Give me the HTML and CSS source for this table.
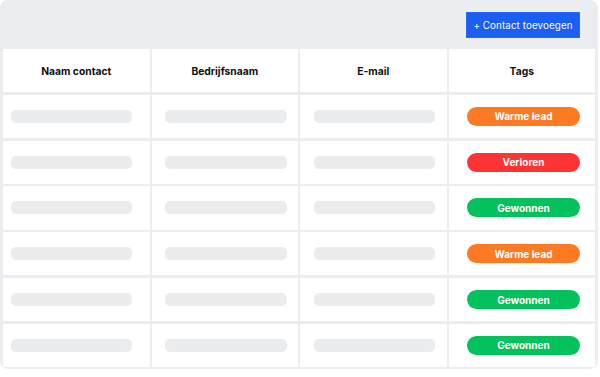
FILE: index.html
```html
<!DOCTYPE html>
<html lang="nl">
<head>
<meta charset="utf-8">
<title>Contacten</title>
<link rel="stylesheet" href="styles.css">
</head>
<body>
<div class="panel">
  <div class="toolbar">
    <button class="add-btn">+ Contact toevoegen</button>
  </div>
  <div class="table">
    <div class="cell head">Naam contact</div>
    <div class="cell head">Bedrijfsnaam</div>
    <div class="cell head">E-mail</div>
    <div class="cell head">Tags</div>

    <div class="cell c1"><span class="bar"></span></div>
    <div class="cell c2"><span class="bar"></span></div>
    <div class="cell c3"><span class="bar"></span></div>
    <div class="cell c4"><span class="tag orange">Warme lead</span></div>

    <div class="cell c1"><span class="bar"></span></div>
    <div class="cell c2"><span class="bar"></span></div>
    <div class="cell c3"><span class="bar"></span></div>
    <div class="cell c4"><span class="tag red">Verloren</span></div>

    <div class="cell c1"><span class="bar"></span></div>
    <div class="cell c2"><span class="bar"></span></div>
    <div class="cell c3"><span class="bar"></span></div>
    <div class="cell c4"><span class="tag green">Gewonnen</span></div>

    <div class="cell c1"><span class="bar"></span></div>
    <div class="cell c2"><span class="bar"></span></div>
    <div class="cell c3"><span class="bar"></span></div>
    <div class="cell c4"><span class="tag orange">Warme lead</span></div>

    <div class="cell c1"><span class="bar"></span></div>
    <div class="cell c2"><span class="bar"></span></div>
    <div class="cell c3"><span class="bar"></span></div>
    <div class="cell c4"><span class="tag green">Gewonnen</span></div>

    <div class="cell c1"><span class="bar"></span></div>
    <div class="cell c2"><span class="bar"></span></div>
    <div class="cell c3"><span class="bar"></span></div>
    <div class="cell c4"><span class="tag green">Gewonnen</span></div>
  </div>
</div>
</body>
</html>
```

FILE: styles.css
```css
* { box-sizing: border-box; }
html, body { margin: 0; padding: 0; background: #ffffff; }
body {
  font-family: Inter, "Noto Sans", sans-serif;
  width: 600px;
  height: 377px;
}
.panel {
  width: 598px;
  height: 369px;
  background: #ecedf0;
  border-radius: 8px;
  padding: 0 3px 2px 3px;
  display: flex;
  flex-direction: column;
}
.toolbar {
  height: 49px;
  flex: none;
  display: flex;
  justify-content: flex-end;
  align-items: flex-start;
  padding: 12px 15px 0 0;
}
.add-btn {
  width: 114px;
  height: 26px;
  background: #1b5ef4;
  color: #ffffff;
  border: 1px solid #2a6af8;
  font-family: Inter, "Noto Sans", sans-serif;
  font-size: 9.8px;
  font-weight: 400;
  padding: 0;
  letter-spacing: 0.1px;
}
.table {
  flex: 1;
  display: grid;
  grid-template-columns: repeat(4, 1fr);
  grid-template-rows: repeat(7, 1fr);
  column-gap: 2px;
  row-gap: 2.5px;
}
.cell {
  background: #ffffff;
  display: flex;
  align-items: center;
}
.head {
  justify-content: center;
  font-size: 10.3px;
  font-weight: 700;
  color: #111111;
}
.bar {
  display: block;
  height: 13px;
  background: #ebecee;
  border-radius: 5px;
}
.c1 { padding-left: 8px; }
.c1 .bar { width: 121px; }
.c2 { padding-left: 13.5px; }
.c2 .bar { width: 122px; }
.c3 { padding-left: 14px; }
.c3 .bar { width: 121px; }
.c4 { padding-left: 18.5px; }
.tag {
  width: 113px;
  height: 19px;
  border-radius: 10px;
  color: #ffffff;
  font-size: 10px;
  font-weight: 700;
  display: flex;
  align-items: center;
  justify-content: center;
}
.orange { background: #fd7a22; }
.red { background: #fe3333; }
.green { background: #03c15d; }
```
